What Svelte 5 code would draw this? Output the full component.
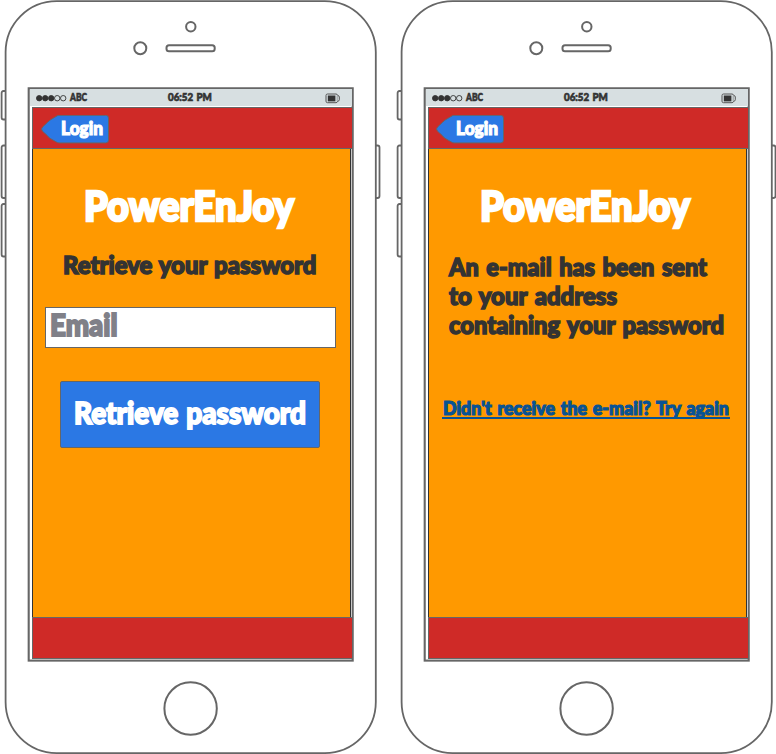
<script>
  const phones = [
    { id: 'retrieve', backShift: 0 },
    { id: 'sent', backShift: -1 }
  ];
</script>

{#snippet label(text, cls, size, width, height, baseline, gap = 0)}
  <svg class="label {cls}" {width} {height} viewBox="0 0 {width} {height}">
    <text
      x="0"
      y={baseline}
      font-size={size}
      word-spacing={gap}
      stroke-width={size * 0.062}
      textLength={width}
      lengthAdjust="spacingAndGlyphs">{text}</text>
  </svg>
{/snippet}

<main class="board">
  {#each phones as phone (phone.id)}
    <section class="phone">
      <svg class="shell" width="396" height="754" viewBox="0 0 396 754" fill="none" stroke="#666" stroke-width="1.8">
        <path d="M5.5 91H3.5Q1.6 91 1.6 93V117.5Q1.6 119.5 3.5 119.5H5.5" />
        <path d="M5.5 145.5H3.5Q1.6 145.5 1.6 147.5V196Q1.6 198 3.5 198H5.5" />
        <path d="M5.5 204H3.5Q1.6 204 1.6 206V254.5Q1.6 256.5 3.5 256.5H5.5" />
        <path d="M376 145.5H377.5Q379.500 145.5 379.5 147.5V196Q379.5 198 377.5 198H376" />
        <rect x="5.6" y="1.1" width="370.2" height="752" rx="51" fill="#fff" />
        <circle cx="190.8" cy="26.8" r="4.7" stroke-width="2" />
        <circle cx="140.3" cy="48.2" r="6" stroke-width="2" />
        <rect x="166.5" y="45.3" width="48.2" height="6" rx="2.5" stroke-width="2" />
        <rect x="28.7" y="88.3" width="324" height="572.3" stroke-width="2.1" />
        <circle cx="190.6" cy="708.5" r="26.2" stroke-width="2" />
      </svg>

      <div class="screen">
        <header class="status">
          <svg class="signal" width="31" height="8" viewBox="0 0 31 8" fill="none" stroke="#333" stroke-width="0.9">
            {#each [3.2, 9.2, 15.2, 21.2, 27.2] as cx, i}
              <circle {cx} cy="4.2" r="2.7" fill={i < 3 ? '#333' : 'none'} />
            {/each}
          </svg>
          <div class="carrier">{@render label('ABC', 'dark', 10.3, 17, 12, 9.2)}</div>
          <div class="clock">{@render label('06:52 PM', 'dark', 10.3, 43.8, 12, 9.2, 1)}</div>
          <svg class="battery" width="16" height="11" viewBox="0 0 16 11" fill="none" stroke="#555">
            <path d="M2.5 1H11Q12.200 1 12.500 2.200Q14.300 2.700 14.300 4V6.800Q14.300 8 12.500 8.500Q12.200 9.700 11 9.700H2.500Q1 9.700 1 8.200V2.500Q1 1 2.500 1Z" />
            <rect x="2.8" y="2.5" width="7.6" height="5.9" fill="#333" stroke="none" />
            <path d="M12.2 2.5V8.3" stroke-width="0.5" />
          </svg>
        </header>

        <nav class="bar">
          <div class="back" style="margin-left: {8 + phone.backShift}px">
            <svg class="arrow" width="69" height="30" viewBox="0 0 69 30">
              <path d="M0.5 14Q0.9 12.200 3.700 10Q6.700 7 9.200 5L16 0.900Q16.800 0.300 18 0.300H64.700Q67.500 0.300 67.500 3.100V25.100Q67.500 27.900 64.700 27.900H18Q16.500 27.900 15.500 27.100L8.500 23Q6 20 3.500 18Q0.700 16 0.500 14Z" fill="#2b78e4" stroke="#666" />
            </svg>
            <div class="backtext">{@render label('Login', 'light', 19.2, 42, 26, 20)}</div>
          </div>
        </nav>

        <div class="content">
          <div class="title">{@render label('PowerEnJoy', 'light', 42.5, 210, 42, 32.3)}</div>
          {#if phone.id === 'retrieve'}
            <div class="subtitle">{@render label('Retrieve your password', 'dark', 25.3, 253.5, 28, 22, 1.5)}</div>
            <div class="field">{@render label('Email', 'muted', 29.5, 67.5, 38, 28)}</div>
            <div class="button">{@render label('Retrieve password', 'light', 29.5, 232, 50, 34.5, 1.5)}</div>
          {:else}
            <div class="message">
              {@render label('An e-mail has been sent', 'dark', 25, 258, 29, 22, 2)}
              {@render label('to your address', 'dark', 25, 168, 29, 22, 2)}
              {@render label('containing your password', 'dark', 25, 275, 29, 22, 2)}
            </div>
            <div class="link">{@render label("Didn't receive the e-mail? Try again", 'blue', 19.5, 286, 18, 15.5, 1.5)}</div>
          {/if}
        </div>
        <footer class="bar bottom"></footer>
      </div>
    </section>
  {/each}
</main>

<style>
  :global(body) {
    margin: 0;
    background: #fff;
  }
  .board {
    display: flex;
    width: 776px;
    height: 754px;
    overflow: hidden;
  }
  .phone {
    position: relative;
    flex: 0 0 396px;
    box-sizing: border-box;
    height: 754px;
    padding: 89px 0 0 30px;
  }
  .shell {
    position: absolute;
    left: 0;
    top: 0;
  }
  .screen {
    position: relative;
    width: 322px;
    height: 570px;
  }
  svg {
    display: block;
  }
  .label {
    overflow: visible;
    font-family: Lato, "Open Sans", sans-serif;
    font-weight: 900;
  }
  .dark { fill: #333; stroke: #333; }
  .light { fill: #fff; stroke: #fff; }
  .muted { fill: #808088; stroke: #808088; }
  .blue { fill: #085394; stroke: #085394; }
  .status {
    display: flex;
    align-items: flex-start;
    box-sizing: border-box;
    height: 17px;
    padding: 3px 0 0 6px;
    background: #d7dfe1;
  }
  .signal { margin-top: 2px; }
  .carrier { margin-left: 3px; }
  .clock { margin-left: 80.8px; }
  .battery { margin-left: 113.4px; margin-top: 1px; }
  .bar {
    box-sizing: border-box;
    width: 320px;
    height: 42px;
    margin: 1px 0 0 2px;
    padding-top: 7px;
    background: #cf2a27;
    border: 1px solid #666;
    border-right-width: 0;
  }
  .bottom {
    margin-top: 0;
  }
  .back {
    display: grid;
    width: 69px;
    height: 30px;
  }
  .arrow, .backtext {
    grid-area: 1 / 1;
  }
  .backtext {
    padding-left: 19.7px;
  }
  .content {
    box-sizing: border-box;
    width: 319px;
    height: 468px;
    margin-left: 2px;
    padding-top: 40px;
    background: #f90;
    border-left: 1px solid #333;
    border-right: 1px solid #333;
  }
  .title { margin-left: 50.7px; }
  .subtitle { margin: 21px 0 0 30.2px; }
  .field {
    box-sizing: border-box;
    width: 291px;
    height: 41px;
    margin: 27px 0 0 12px;
    padding-left: 4px;
    background: #fff;
    border: 1px solid #666;
  }
  .button {
    box-sizing: border-box;
    width: 260px;
    height: 67px;
    margin: 33px 0 0 27px;
    padding: 7px 0 0 12.5px;
    background: #2b78e4;
    border: 1px solid #666;
    border-radius: 2px;
  }
  .message { margin: 23px 0 0 20px; }
  .link {
    box-sizing: border-box;
    width: 288px;
    height: 20px;
    margin: 58px 0 0 13px;
    padding-left: 0.5px;
    border-bottom: 2px solid #085394;
  }
</style>
